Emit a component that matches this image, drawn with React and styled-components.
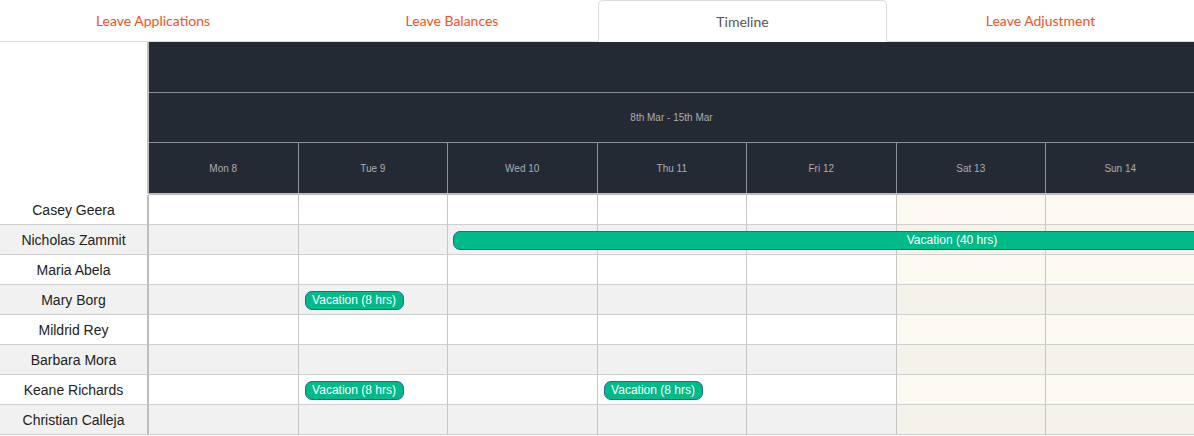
import React from 'react';
import styled, { createGlobalStyle } from 'styled-components';

const DAY_W = 149.5;

const Global = createGlobalStyle`
  html, body { margin: 0; padding: 0; background: #fff; }
  body {
    width: 1194px;
    height: 436px;
    overflow: hidden;
    font-family: "Liberation Sans", Arial, Helvetica, sans-serif;
  }
  * { box-sizing: border-box; }
`;

const Page = styled.div`
  width: 1194px;
  overflow: hidden;
`;

const TabBar = styled.div`
  display: grid;
  grid-template-columns: 306px 292px 289px 1fr;
  height: 42px;
  border-bottom: 1px solid #dcdcdc;
  font-family: Lato, "Open Sans", sans-serif;
`;

const Tab = styled.div`
  display: flex;
  align-items: center;
  justify-content: center;
  font-size: 14px;
  color: ${p => (p.$active ? '#555' : '#f4511e')};
  ${p =>
    p.$active &&
    `
    background: #fff;
    border: 1px solid #dcdcdc;
    border-bottom-color: #fff;
    border-radius: 5px 5px 0 0;
    margin-bottom: -1px;
  `}
`;

const Timeline = styled.div`
  display: grid;
  grid-template-columns: 149px 1fr;
`;

const HeaderBlank = styled.div`
  background: #fff;
  border-right: 2px solid #bdbdbd;
  border-bottom: 2px solid transparent;
`;

const HeaderMain = styled.div`
  background: #232a33;
  border-bottom: 2px solid #bdbdbd;
  overflow: hidden;
`;

const HeaderRow = styled.div`
  height: ${p => p.$h || 50}px;
  border-bottom: 1px solid #8c9197;
  display: flex;
  align-items: center;
  justify-content: center;
  font-size: 10px;
  color: #a9adb2;
`;

const DaysRow = styled.div`
  display: grid;
  grid-template-columns: repeat(7, ${DAY_W}px);
  height: 50px;
`;

const DayHead = styled.div`
  display: flex;
  align-items: center;
  justify-content: center;
  border-right: 1px solid #8c9197;
  font-size: 10px;
  color: #a9adb2;
`;

const NameCell = styled.div`
  height: 30px;
  display: flex;
  align-items: center;
  justify-content: center;
  font-size: 14px;
  color: #222;
  background: ${p => (p.$alt ? '#f1f1f1' : '#fff')};
  border-right: 2px solid #bdbdbd;
  border-bottom: 1px solid #cfcfcf;
`;

const Track = styled.div`
  position: relative;
  height: 30px;
  display: grid;
  grid-template-columns: repeat(7, ${DAY_W}px);
  border-bottom: 1px solid #cfcfcf;
  overflow: hidden;
`;

const DayCell = styled.div`
  border-right: 1px solid #c6c6c6;
  background: ${p =>
    p.$weekend ? (p.$alt ? '#f5f2ea' : '#fcf9f1') : p.$alt ? '#f1f1f1' : '#fff'};
`;

const Event = styled.div`
  position: absolute;
  top: 6px;
  height: 19px;
  background: #00ba89;
  border: 1px solid #2566a6;
  border-radius: 7px;
  color: #fff;
  font-size: 12px;
  line-height: 17px;
  text-align: center;
  white-space: nowrap;
`;

const days = ['Mon 8', 'Tue 9', 'Wed 10', 'Thu 11', 'Fri 12', 'Sat 13', 'Sun 14'];

const people = [
  { name: 'Casey Geera', events: [] },
  { name: 'Nicholas Zammit', events: [{ day: 2, offset: 5, width: 998, label: 'Vacation (40 hrs)' }] },
  { name: 'Maria Abela', events: [] },
  { name: 'Mary Borg', events: [{ day: 1, offset: 6, width: 99, label: 'Vacation (8 hrs)' }] },
  { name: 'Mildrid Rey', events: [] },
  { name: 'Barbara Mora', events: [] },
  {
    name: 'Keane Richards',
    events: [
      { day: 1, offset: 6, width: 99, label: 'Vacation (8 hrs)' },
      { day: 3, offset: 6, width: 99, label: 'Vacation (8 hrs)' },
    ],
  },
  { name: 'Christian Calleja', events: [] },
];

export default function App() {
  return (
    <Page>
      <Global />
      <TabBar>
        <Tab>Leave Applications</Tab>
        <Tab>Leave Balances</Tab>
        <Tab $active>Timeline</Tab>
        <Tab>Leave Adjustment</Tab>
      </TabBar>
      <Timeline>
        <HeaderBlank />
        <HeaderMain>
          <HeaderRow $h={51} />
          <HeaderRow>8th Mar - 15th Mar</HeaderRow>
          <DaysRow>
            {days.map(d => (
              <DayHead key={d}>{d}</DayHead>
            ))}
          </DaysRow>
        </HeaderMain>
        {people.map((p, i) => {
          const alt = i % 2 === 1;
          return (
            <React.Fragment key={p.name}>
              <NameCell $alt={alt}>{p.name}</NameCell>
              <Track>
                {days.map((d, j) => (
                  <DayCell key={d} $alt={alt} $weekend={j >= 5} />
                ))}
                {p.events.map((e, k) => (
                  <Event
                    key={k}
                    style={{ left: e.day * DAY_W + e.offset, width: e.width }}
                  >
                    {e.label}
                  </Event>
                ))}
              </Track>
            </React.Fragment>
          );
        })}
      </Timeline>
    </Page>
  );
}
